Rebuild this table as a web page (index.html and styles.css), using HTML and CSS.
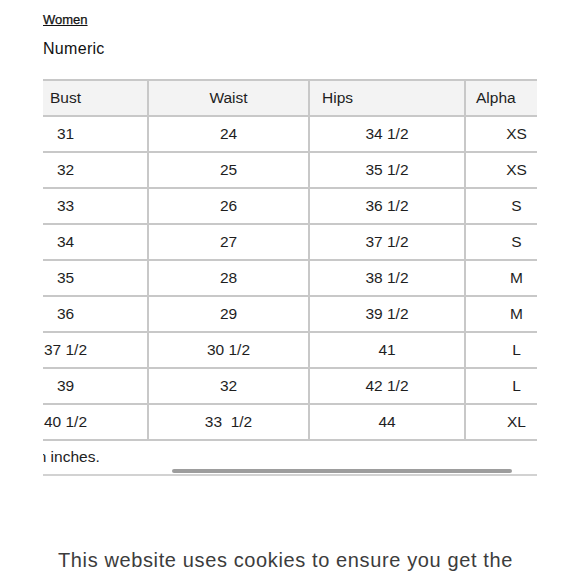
FILE: index.html
```html
<!DOCTYPE html>
<html lang="en">
<head>
<meta charset="utf-8">
<title>Size chart</title>
<link rel="stylesheet" href="styles.css">
</head>
<body>
<main class="page">
  <a class="crumb" href="#">Women</a>
  <h2 class="title">Numeric</h2>
  <div class="scroller">
    <div class="scroll-content">
      <div class="grid" role="table">
        <div class="cell head c1">Bust</div>
        <div class="cell head c2">Waist</div>
        <div class="cell head c3 left">Hips</div>
        <div class="cell head c4 left">Alpha</div>

        <div class="cell c1">31</div><div class="cell c2">24</div><div class="cell c3">34 1/2</div><div class="cell c4">XS</div>
        <div class="cell c1">32</div><div class="cell c2">25</div><div class="cell c3">35 1/2</div><div class="cell c4">XS</div>
        <div class="cell c1">33</div><div class="cell c2">26</div><div class="cell c3">36 1/2</div><div class="cell c4">S</div>
        <div class="cell c1">34</div><div class="cell c2">27</div><div class="cell c3">37 1/2</div><div class="cell c4">S</div>
        <div class="cell c1">35</div><div class="cell c2">28</div><div class="cell c3">38 1/2</div><div class="cell c4">M</div>
        <div class="cell c1">36</div><div class="cell c2">29</div><div class="cell c3">39 1/2</div><div class="cell c4">M</div>
        <div class="cell c1">37 1/2</div><div class="cell c2">30 1/2</div><div class="cell c3">41</div><div class="cell c4">L</div>
        <div class="cell c1">39</div><div class="cell c2">32</div><div class="cell c3">42 1/2</div><div class="cell c4">L</div>
        <div class="cell c1">40 1/2</div><div class="cell c2">33&nbsp; 1/2</div><div class="cell c3">44</div><div class="cell c4">XL</div>
      </div>
      <p class="note">Sizes in inches.</p>
    </div>
    <div class="indicator"></div>
  </div>
</main>
<section class="cookie">
  <p>This website uses cookies to ensure you get the best experience on our website.</p>
</section>
</body>
</html>
```
FILE: styles.css
```css
* { box-sizing: border-box; }
html, body { margin: 0; padding: 0; background: #fff; }
body {
  font-family: "Liberation Sans", Arial, sans-serif;
  color: #222;
  overflow: hidden;
}
.page {
  padding: 10px 0 0 43px;
  width: 537px;
}
.crumb {
  display: inline-block;
  font-size: 13px;
  line-height: 16px;
  color: #111;
  text-decoration: underline;
  text-underline-offset: 1px;
  -webkit-text-stroke: 0.25px #111;
}
.title {
  margin: 11px 0 0;
  font-size: 16px;
  line-height: 20px;
  font-weight: normal;
  color: #111;
  letter-spacing: 0.3px;
}
.scroller {
  margin-top: 20px;
  width: 494px;
  overflow: hidden;
  border-bottom: 2px solid #d2d2d2;
}
.scroll-content {
  margin-left: -59px;
  width: 583px;
}
.grid {
  display: grid;
  grid-template-columns: 165px 161px 156px 101px;
  border-top: 2px solid #c8c8c8;
}
.cell {
  height: 36px;
  display: flex;
  align-items: center;
  justify-content: center;
  font-size: 15.5px;
  color: #1e1e1e;
  border-bottom: 2px solid #c8c8c8;
  border-right: 2px solid #c8c8c8;
}
.cell.c4 { border-right: none; }
.head { background: #f3f3f3; }
.head.left { justify-content: flex-start; }
.head.c3 { padding-left: 12px; }
.head.c4 { padding-left: 10px; }
.note {
  margin: 0;
  padding: 7px 0 0 8px;
  font-size: 15.5px;
  line-height: 18px;
  color: #222;
}
.indicator {
  margin: 3px 0 1px 129px;
  width: 340px;
  height: 4px;
  border-radius: 2px;
  background: #9d9d9d;
}
.cookie {
  padding: 69px 0 0 58px;
  width: 545px;
}
.cookie p {
  margin: 0;
  font-size: 20px;
  line-height: 30px;
  letter-spacing: 0.62px;
  color: #3c3c3c;
}
```
